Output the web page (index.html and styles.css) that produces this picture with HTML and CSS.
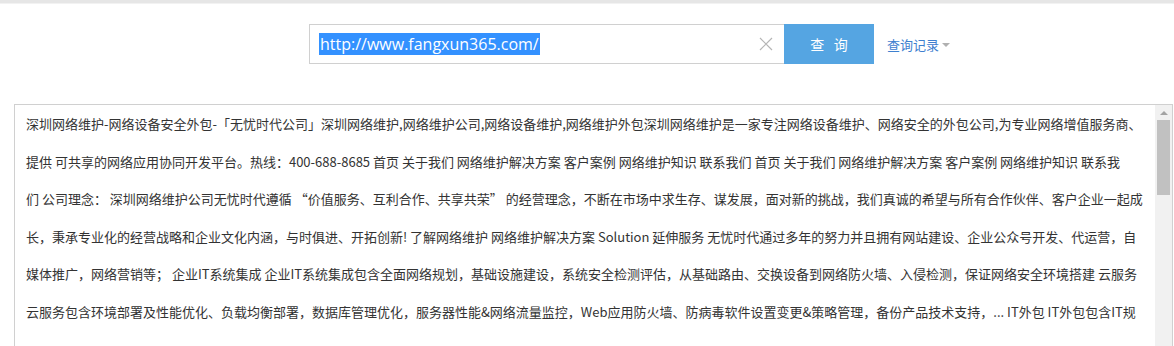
FILE: index.html
```html
<!DOCTYPE html>
<html lang="zh-CN">
<head>
<meta charset="utf-8">
<title>查询</title>
<link rel="stylesheet" href="styles.css">
</head>
<body>
<div class="topbar"></div>
<div class="search-row">
  <div class="search-input">
    <span class="query"><span class="selected">http://www.fangxun365.com/</span></span>
    <svg class="clear" width="14" height="14" viewBox="0 0 14 14"><path d="M1 1 L13 13 M13 1 L1 13" stroke="#b5b5b5" stroke-width="1.2" fill="none"/></svg>
  </div>
  <button class="search-btn">查&nbsp;&nbsp;&nbsp;询</button>
  <a class="history">查询记录<span class="caret"></span></a>
</div>
<div class="result">
  <div class="result-text">
    <div class="line">深圳网络维护-网络设备安全外包-「无忧时代公司」深圳网络维护,网络维护公司,网络设备维护,网络维护外包深圳网络维护是一家专注网络设备维护、网络安全的外包公司,为专业网络增值服务商、</div>
    <div class="line">提供 可共享的网络应用协同开发平台。热线：400-688-8685 首页 关于我们 网络维护解决方案 客户案例 网络维护知识 联系我们 首页 关于我们 网络维护解决方案 客户案例 网络维护知识 联系我</div>
    <div class="line">们 公司理念： 深圳网络维护公司无忧时代遵循 “价值服务、互利合作、共享共荣” 的经营理念，不断在市场中求生存、谋发展，面对新的挑战，我们真诚的希望与所有合作伙伴、客户企业一起成</div>
    <div class="line">长，秉承专业化的经营战略和企业文化内涵，与时俱进、开拓创新! 了解网络维护 网络维护解决方案 Solution 延伸服务 无忧时代通过多年的努力并且拥有网站建设、企业公众号开发、代运营，自</div>
    <div class="line">媒体推广，网络营销等； 企业IT系统集成 企业IT系统集成包含全面网络规划，基础设施建设，系统安全检测评估，从基础路由、交换设备到网络防火墙、入侵检测，保证网络安全环境搭建 云服务</div>
    <div class="line">云服务包含环境部署及性能优化、负载均衡部署，数据库管理优化，服务器性能&amp;网络流量监控，Web应用防火墙、防病毒软件设置变更&amp;策略管理，备份产品技术支持，... IT外包 IT外包包含IT规</div>
  </div>
  <div class="scrollbar">
    <div class="scroll-up"></div>
    <div class="scroll-thumb"></div>
  </div>
</div>
</body>
</html>
```
FILE: styles.css
```css
html, body {
  margin: 0;
  padding: 0;
  background: #ffffff;
  overflow: hidden;
}
body {
  font-family: "Noto Sans CJK SC", "Noto Sans", sans-serif;
  color: #333333;
  height: 346px;
}
.topbar {
  height: 3px;
  background: #e6e6e6;
  border-bottom: 1px solid #f2f2f2;
}
.search-row {
  display: flex;
  align-items: center;
  margin-top: 20px;
  padding-left: 309px;
  height: 40px;
}
.search-input {
  box-sizing: border-box;
  width: 475px;
  height: 40px;
  border: 1px solid #d0d0d0;
  border-right: none;
  display: flex;
  align-items: center;
  justify-content: space-between;
  padding: 0 11px 0 9px;
}
.query {
  font-family: "Open Sans", "Noto Sans", sans-serif;
  font-size: 16px;
  line-height: 20px;
}
.selected {
  background: #3391ff;
  color: #ffffff;
  padding: 0 1px;
}
.clear {
  display: block;
}
.search-btn {
  width: 90px;
  height: 40px;
  border: none;
  background: #55a5e2;
  color: #ffffff;
  font-family: "Noto Sans CJK SC", sans-serif;
  font-size: 14px;
  padding: 0;
  margin: 0;
}
.history {
  margin-left: 13px;
  color: #3e80cf;
  font-size: 13px;
  display: flex;
  align-items: center;
}
.caret {
  width: 0;
  height: 0;
  border-left: 4px solid transparent;
  border-right: 4px solid transparent;
  border-top: 4px solid #b0b0b0;
  margin-left: 3px;
  margin-top: 1px;
}
.result {
  margin: 40px 0 0 14px;
  width: 1159px;
  height: 242px;
  box-sizing: border-box;
  border: 1px solid #d0d0d0;
  border-bottom: none;
  display: flex;
}
.result-text {
  flex: 1;
  padding: 0 0 0 11px;
  font-size: 13px;
  line-height: 37.5px;
  color: #333333;
  overflow: hidden;
}
.line {
  white-space: nowrap;
}
.scrollbar {
  width: 17px;
  background: #f1f1f1;
  display: flex;
  flex-direction: column;
  align-items: center;
}
.scroll-up {
  height: 15px;
  width: 17px;
  position: relative;
}
.scroll-up::after {
  content: "";
  position: absolute;
  left: 5px;
  top: 6px;
  border-left: 4px solid transparent;
  border-right: 4px solid transparent;
  border-bottom: 4px solid #a3a3a3;
}
.scroll-thumb {
  width: 13px;
  height: 75px;
  background: #c1c1c1;
}
```
